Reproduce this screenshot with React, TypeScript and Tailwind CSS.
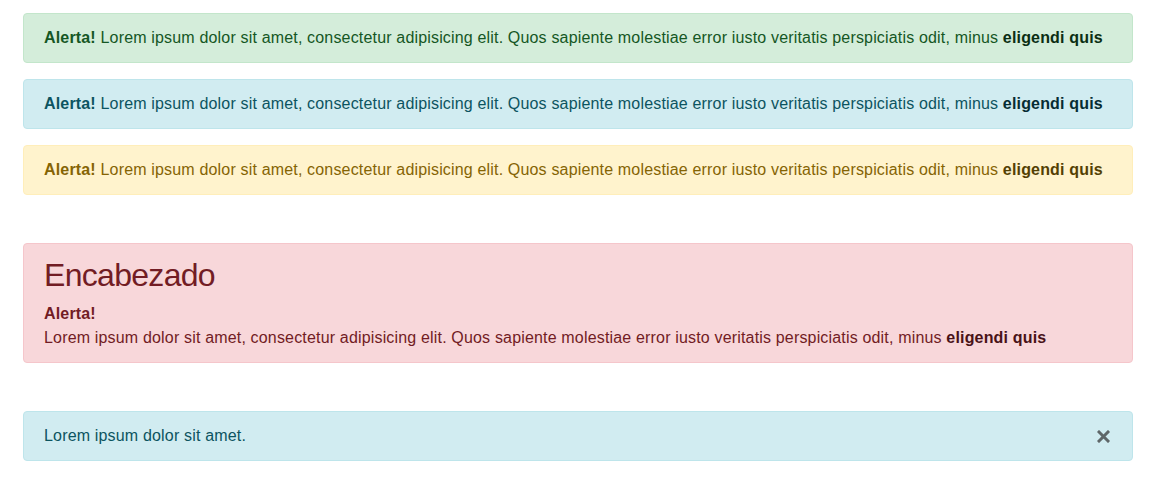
import React from 'react';

const font = { fontFamily: '"Liberation Sans", Arial, sans-serif' };

const Lorem = ({ linkClass }: { linkClass: string }) => (
  <>
    Lorem ipsum dolor sit amet, consectetur adipisicing elit. Quos sapiente molestiae error iusto veritatis perspiciatis
    odit, minus <strong className={`font-bold ${linkClass}`}>eligendi quis</strong>
  </>
);

export default function App() {
  return (
    <div className="bg-white min-h-[494px] text-base leading-6" style={font}>
      <div className="ml-[23px] w-[1110px] pt-[13px]">
        <div className="mb-4 rounded border border-[#c3e6cb] bg-[#d4edda] px-5 py-3 text-[#155724] tracking-[0.17px] whitespace-nowrap">
          <strong className="font-bold">Alerta!</strong> <Lorem linkClass="text-[#0b2e13]" />
        </div>
        <div className="mb-4 rounded border border-[#bee5eb] bg-[#d1ecf1] px-5 py-3 text-[#0c5460] tracking-[0.17px] whitespace-nowrap">
          <strong className="font-bold">Alerta!</strong> <Lorem linkClass="text-[#062c33]" />
        </div>
        <div className="mb-4 rounded border border-[#ffeeba] bg-[#fff3cd] px-5 py-3 text-[#856404] tracking-[0.17px] whitespace-nowrap">
          <strong className="font-bold">Alerta!</strong> <Lorem linkClass="text-[#533f03]" />
        </div>

        <div className="mt-12 mb-4 rounded border border-[#f5c6cb] bg-[#f8d7da] px-5 py-3 text-[#721c24] tracking-[0.17px]">
          <h2 className="mb-2 text-[32px] leading-[38.4px] font-normal tracking-[-0.7px]">Encabezado</h2>
          <p className="whitespace-nowrap">
            <strong className="font-bold">Alerta!</strong>
            <br />
            <Lorem linkClass="text-[#491217]" />
          </p>
        </div>

        <div className="relative mt-12 rounded border border-[#bee5eb] bg-[#d1ecf1] py-3 pl-5 pr-16 text-[#0c5460] tracking-[0.17px]">
          Lorem ipsum dolor sit amet.
          <button className="absolute right-0 top-0 flex h-full items-center px-[22px] text-[#5f6769]" aria-label="Close">
            <svg width="13" height="13" viewBox="0 0 13 13">
              <path d="M2 2 L11 11 M11 2 L2 11" stroke="currentColor" strokeWidth="3" strokeLinecap="square" />
            </svg>
          </button>
        </div>
      </div>
    </div>
  );
}
